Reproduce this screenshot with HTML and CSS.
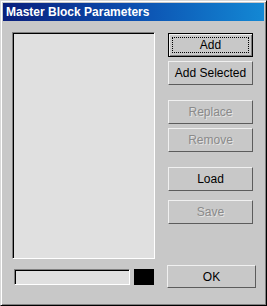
FILE: index.html
```html
<!DOCTYPE html>
<html>
<head>
<meta charset="utf-8">
<link rel="stylesheet" href="styles.css">
</head>
<body>
<div class="window">
  <div class="titlebar">Master Block Parameters</div>
  <div class="content">
    <div class="left">
      <div class="listbox"></div>
      <div class="bottom-row">
        <div class="field"></div>
        <div class="swatch"></div>
      </div>
    </div>
    <div class="right">
      <button class="btn default"><span class="focus">Add</span></button>
      <button class="btn gap-s">Add Selected</button>
      <button class="btn gap-l disabled">Replace</button>
      <button class="btn gap-s disabled">Remove</button>
      <button class="btn gap-l">Load</button>
      <button class="btn gap-m disabled">Save</button>
      <button class="btn ok">OK</button>
    </div>
  </div>
</div>
</body>
</html>
```
FILE: styles.css
```css
html, body {
  margin: 0;
  padding: 0;
  background: #c8c8c8;
}
.window {
  width: 267px;
  height: 306px;
  box-sizing: border-box;
  background: #c8c8c8;
  border-top: 1px solid #d8d8d8;
  border-left: 1px solid #d8d8d8;
  border-right: 1px solid #000;
  border-bottom: 1px solid #000;
  box-shadow: inset 1px 1px 0 #fff, inset -1px -1px 0 #808080;
  padding: 2px;
  font-family: "Liberation Sans", Arial, sans-serif;
  font-size: 11px;
  display: flex;
  flex-direction: column;
}
.titlebar {
  height: 18px;
  line-height: 18px;
  padding-left: 3px;
  color: #fff;
  font-weight: bold;
  font-size: 12px;
  background: linear-gradient(to right, #0a1f7c, #0c4fb0 50%, #1388d4);
  white-space: nowrap;
}
.content {
  display: flex;
  padding-left: 9px;
  padding-top: 11px;
}
.left {
  width: 143px;
  display: flex;
  flex-direction: column;
}
.listbox {
  height: 227px;
  box-sizing: border-box;
  background: #e0e0e0;
  border-top: 1px solid #808080;
  border-left: 1px solid #808080;
  border-right: 1px solid #fff;
  border-bottom: 1px solid #fff;
  box-shadow: inset 1px 1px 0 #000;
}
.bottom-row {
  display: flex;
  margin-top: 10px;
  padding-left: 2px;
}
.field {
  width: 116px;
  height: 16px;
  box-sizing: border-box;
  background: #e0e0e0;
  border-top: 1px solid #808080;
  border-left: 1px solid #808080;
  border-right: 1px solid #fff;
  border-bottom: 1px solid #fff;
  box-shadow: inset 1px 1px 0 #000;
}
.swatch {
  width: 20px;
  height: 16px;
  margin-left: 4px;
  background: #000;
}
.right {
  display: flex;
  flex-direction: column;
  margin-left: 13px;
  padding-top: 1px;
}
.btn {
  width: 85px;
  height: 24px;
  box-sizing: border-box;
  margin: 0;
  padding: 0;
  background: #c8c8c8;
  font-family: "Liberation Sans", Arial, sans-serif;
  font-size: 12px;
  color: #000;
  border-top: 1px solid #f0f0f0;
  border-left: 1px solid #f0f0f0;
  border-right: 1px solid #5c5c5c;
  border-bottom: 1px solid #5c5c5c;
  display: flex;
  align-items: center;
  justify-content: center;
}
.btn.default {
  border: 1px solid #000;
  box-shadow: inset 1px 1px 0 #f0f0f0, inset -1px -1px 0 #808080;
  padding: 3px;
}
.focus {
  flex: 1;
  align-self: stretch;
  border: 1px dotted #000;
  display: flex;
  align-items: center;
  justify-content: center;
}
.gap-s { margin-top: 4px; }
.gap-m { margin-top: 9px; }
.gap-l { margin-top: 15px; }
.btn.disabled {
  color: #8a8a8a;
  text-shadow: 1px 1px 0 #e4e4e4;
}
.btn.ok {
  width: 89px;
  height: 23px;
  margin-top: 41px;
  margin-left: -1px;
}
```
